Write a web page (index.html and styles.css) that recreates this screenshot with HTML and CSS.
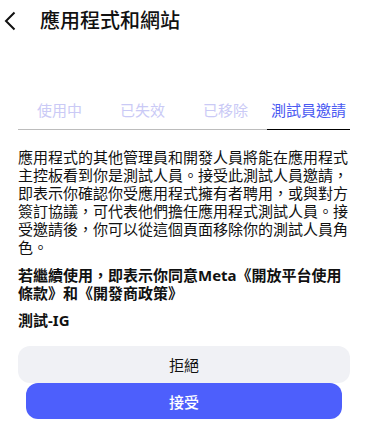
FILE: index.html
```html
<!DOCTYPE html>
<html lang="zh-Hant">
<head>
    <meta charset="UTF-8">
    <meta name="viewport" content="width=device-width, initial-scale=1.0">
    <title>應用程式和網站</title>
<link rel="stylesheet" href="styles.css">
</head>
<body>
<div id="wrap">
    <header class="top">
        <a href="#" class="back">
            <svg width="12" height="20" viewBox="0 0 12 20"><polyline points="10.5,1.5 2,10 10.5,18.5" fill="none" stroke="#111" stroke-width="2"/></svg>
        </a>
        <h1>應用程式和網站</h1>
    </header>

    <ul class="tabs">
        <li>使用中</li>
        <li>已失效</li>
        <li>已移除</li>
        <li class="on">測試員邀請</li>
    </ul>

    <div class="invite">
        <p class="desc">應用程式的其他管理員和開發人員將能在應用程式主控板看到你是測試人員。接受此測試人員邀請，即表示你確認你受應用程式擁有者聘用，或與對方簽訂協議，可代表他們擔任應用程式測試人員。接受邀請後，你可以從這個頁面移除你的測試人員角色。</p>
        <p class="agree">若繼續使用，即表示你同意Meta《開放平台使用條款》和《開發商政策》</p>
        <p class="app">測試-IG</p>

        <div class="btns">
            <button type="button" class="no">拒絕</button>
            <button type="button" class="yes">接受</button>
        </div>
    </div>
</div>
</body>
</html>
```

FILE: styles.css
```css
* {margin: 0; padding: 0;}
li {list-style: none;}
div, header, ul, li, p, h1, a, button {box-sizing: border-box;}

body {font-family: "Noto Sans", "Noto Sans CJK TC", sans-serif; color: #111; background: #fff;}

#wrap {width: 100%; height: 100vh;}

/* 상단 */
.top {height: 42px; display: flex; align-items: center; padding-left: 4px;}
.top .back {display: flex; width: 12px; height: 20px;}
.top h1 {margin-left: 24px; font-size: 20px; font-weight: 500; line-height: 24px; color: #111;}

/* 탭 */
.tabs {display: flex; margin: 58px 30px 0 18px;}
.tabs li {flex: 1; text-align: center; font-size: 15px; line-height: 20px; padding-bottom: 9px;
    color: #cacaf6; border-bottom: 1px solid #bcbcbc;}
.tabs li.on {color: #4a5af2; border-bottom-color: #000;}

/* 본문 */
.invite {padding: 0 30px 0 18px;}
.invite p {font-size: 15px; line-height: 18px;}
.invite .desc {margin-top: 18px;}
.invite .agree {margin-top: 10px; font-weight: 700;}
.invite .app {margin-top: 9px; font-weight: 700;}

/* 버튼 */
.btns {margin-top: 17px; display: flex; flex-direction: column;}
.btns button {border: 0; font-family: inherit; font-size: 15px; cursor: pointer; border-radius: 12px;}
.btns .no {height: 37px; background: #f0f1f5; color: #111;}
.btns .yes {height: 36px; margin: 0 8px; background: #4d5ffc; color: #fff; font-weight: 500;}
```
